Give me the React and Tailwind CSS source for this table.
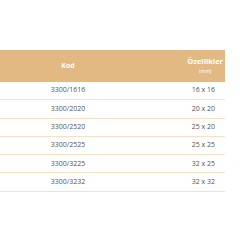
import React from "react";

const rows = [
  ["3300/1616", "16 x 16"],
  ["3300/2020", "20 x 20"],
  ["3300/2520", "25 x 20"],
  ["3300/2525", "25 x 25"],
  ["3300/3225", "32 x 25"],
  ["3300/3232", "32 x 32"],
];

export default function App() {
  return (
    <div className="w-[240px] h-[240px] bg-white pt-[50px] font-['Open_Sans',sans-serif]">
      <div className="w-[225px]">
        <div className="flex h-[32px] items-center bg-[#e2b983] text-white">
          <div className="w-[136px] text-center text-[7px] font-bold">Kod</div>
          <div className="flex flex-1 justify-end pr-[2px]">
            <div className="flex flex-col items-center leading-none">
              <span className="text-[7.5px] font-bold">Özellikler</span>
              <span className="mt-[4px] text-[5px]">(mm)</span>
            </div>
          </div>
        </div>
        {rows.map(([kod, size]) => (
          <div
            key={kod}
            className="flex h-[18.3px] items-center border-b border-[#f3e2c6] text-[7px] text-[#555]"
          >
            <div className="w-[136px] text-center">{kod}</div>
            <div className="flex-1 pr-[10px] text-right">{size}</div>
          </div>
        ))}
      </div>
    </div>
  );
}
